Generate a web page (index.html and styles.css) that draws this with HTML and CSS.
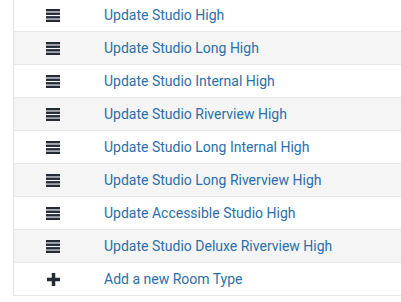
FILE: index.html
```html
<!DOCTYPE html>
<html>
<head>
<meta charset="utf-8">
<link rel="stylesheet" href="styles.css">
</head>
<body>
<div class="wrap">
<table class="list">
<tbody>
<tr><td class="ic"><svg class="bars" viewBox="0 0 14 13" width="14" height="13"><rect x="0" y="0" width="14" height="2.4"/><rect x="0" y="3.55" width="14" height="2.4"/><rect x="0" y="7.1" width="14" height="2.4"/><rect x="0" y="10.6" width="14" height="2.4"/></svg></td><td class="tx"><a href="#">Update Studio High</a></td></tr>
<tr><td class="ic"><svg class="bars" viewBox="0 0 14 13" width="14" height="13"><rect x="0" y="0" width="14" height="2.4"/><rect x="0" y="3.55" width="14" height="2.4"/><rect x="0" y="7.1" width="14" height="2.4"/><rect x="0" y="10.6" width="14" height="2.4"/></svg></td><td class="tx"><a href="#">Update Studio Long High</a></td></tr>
<tr><td class="ic"><svg class="bars" viewBox="0 0 14 13" width="14" height="13"><rect x="0" y="0" width="14" height="2.4"/><rect x="0" y="3.55" width="14" height="2.4"/><rect x="0" y="7.1" width="14" height="2.4"/><rect x="0" y="10.6" width="14" height="2.4"/></svg></td><td class="tx"><a href="#">Update Studio Internal High</a></td></tr>
<tr><td class="ic"><svg class="bars" viewBox="0 0 14 13" width="14" height="13"><rect x="0" y="0" width="14" height="2.4"/><rect x="0" y="3.55" width="14" height="2.4"/><rect x="0" y="7.1" width="14" height="2.4"/><rect x="0" y="10.6" width="14" height="2.4"/></svg></td><td class="tx"><a href="#">Update Studio Riverview High</a></td></tr>
<tr><td class="ic"><svg class="bars" viewBox="0 0 14 13" width="14" height="13"><rect x="0" y="0" width="14" height="2.4"/><rect x="0" y="3.55" width="14" height="2.4"/><rect x="0" y="7.1" width="14" height="2.4"/><rect x="0" y="10.6" width="14" height="2.4"/></svg></td><td class="tx"><a href="#">Update Studio Long Internal High</a></td></tr>
<tr><td class="ic"><svg class="bars" viewBox="0 0 14 13" width="14" height="13"><rect x="0" y="0" width="14" height="2.4"/><rect x="0" y="3.55" width="14" height="2.4"/><rect x="0" y="7.1" width="14" height="2.4"/><rect x="0" y="10.6" width="14" height="2.4"/></svg></td><td class="tx"><a href="#">Update Studio Long Riverview High</a></td></tr>
<tr><td class="ic"><svg class="bars" viewBox="0 0 14 13" width="14" height="13"><rect x="0" y="0" width="14" height="2.4"/><rect x="0" y="3.55" width="14" height="2.4"/><rect x="0" y="7.1" width="14" height="2.4"/><rect x="0" y="10.6" width="14" height="2.4"/></svg></td><td class="tx"><a href="#">Update Accessible Studio High</a></td></tr>
<tr><td class="ic"><svg class="bars" viewBox="0 0 14 13" width="14" height="13"><rect x="0" y="0" width="14" height="2.4"/><rect x="0" y="3.55" width="14" height="2.4"/><rect x="0" y="7.1" width="14" height="2.4"/><rect x="0" y="10.6" width="14" height="2.4"/></svg></td><td class="tx"><a href="#">Update Studio Deluxe Riverview High</a></td></tr>
<tr><td class="ic"><svg class="plus" viewBox="0 0 13 13" width="13" height="13"><rect x="4.75" y="0" width="3.5" height="13"/><rect x="0" y="4.75" width="13" height="3.5"/></svg></td><td class="tx"><a href="#">Add a new Room Type</a></td></tr>
</tbody>
</table>
</div>
</body>
</html>
```
FILE: styles.css
```css
html, body {
  margin: 0;
  padding: 0;
  background: #ffffff;
}
body {
  font-family: Roboto, "Liberation Sans", sans-serif;
  font-size: 14px;
  overflow: hidden;
}
.wrap {
  padding-left: 13px;
  margin-top: -2px;
}
.list {
  width: 100%;
  border-collapse: collapse;
  border-left: 1px solid #e2e2e2;
}
.list td {
  border-top: 1px solid #e8e8e8;
  border-bottom: 1px solid #e8e8e8;
  height: 32px;
  padding: 0;
  line-height: 20px;
  vertical-align: middle;
}
.list tr:nth-child(even) td {
  background: #f5f5f5;
}
.ic {
  width: 78px;
  text-align: center;
}
.ic svg {
  display: block;
  margin: 0 auto;
  fill: #232a38;
}
.tx {
  padding-left: 12px !important;
}
.tx a {
  color: #2b6faa;
  text-decoration: none;
}
```
